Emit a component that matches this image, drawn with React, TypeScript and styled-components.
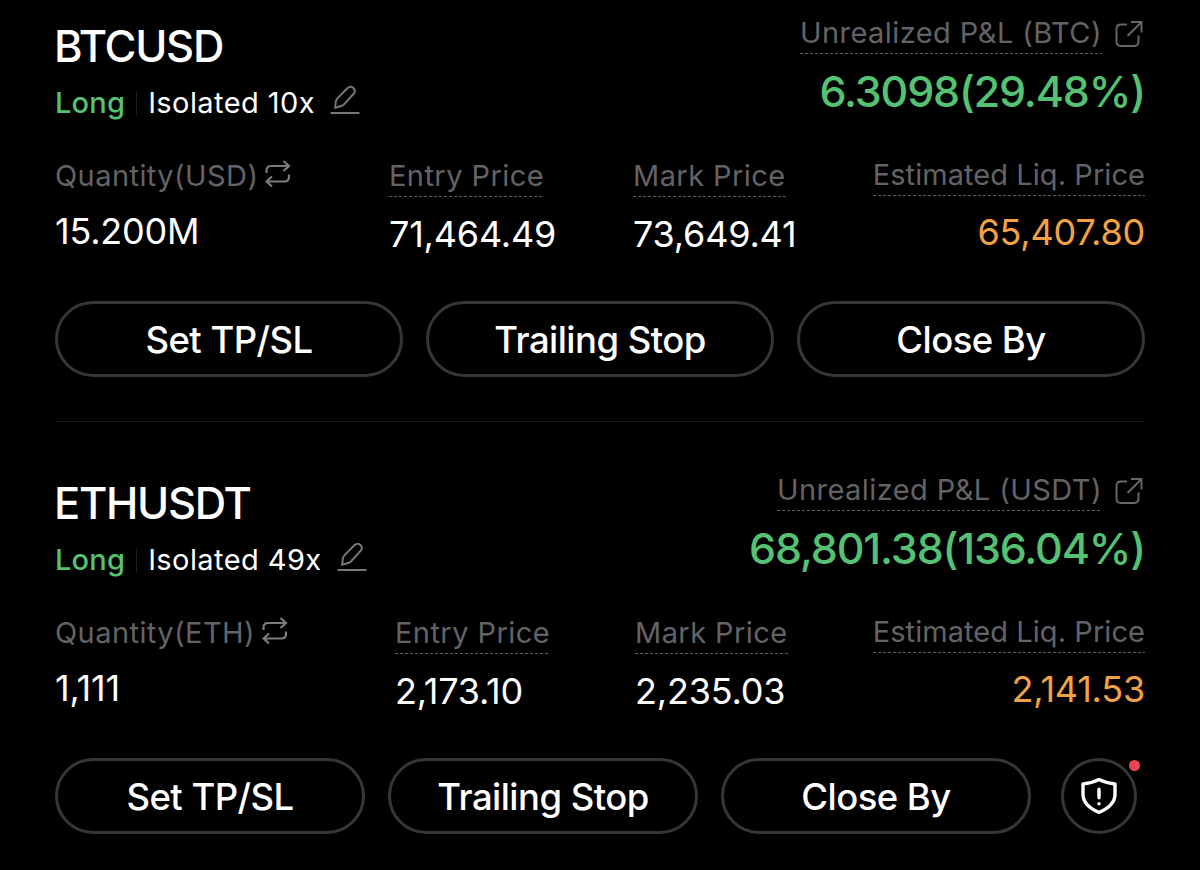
import styled, { createGlobalStyle } from 'styled-components';

const GlobalStyle = createGlobalStyle`
    * {
        box-sizing: border-box;
    }
    body {
        margin: 0;
        background-color: #000;
        color: #fff;
        font-family: Inter, 'Liberation Sans', sans-serif;
    }
`;
const Page = styled.div`
    width: 1200px;
    height: 870px;
    padding: 0 55px;
    overflow: hidden;
    background-color: #000;
`;
const Position = styled.section`
    height: 457px;
    padding-top: 13px;
`;
const Header = styled.div`
    display: flex;
    justify-content: space-between;
    height: 143px;
`;
const Heading = styled.div`
    padding-top: 7px;
`;
const Pair = styled.div`
    margin-left: -1px;
    font-size: 43.5px;
    font-weight: 500;
    line-height: 52px;
    letter-spacing: -1.3px;
`;
const Meta = styled.div`
    display: flex;
    align-items: center;
    height: 36px;
    margin-top: 13px;
    font-size: 29px;
    line-height: 36px;
    letter-spacing: 0.42px;
    white-space: nowrap;
    & > svg {
        margin: 0 0 6px 15px;
    }
`;
const Side = styled.span`
    color: #55c172;
    font-weight: 500;
    letter-spacing: 0.2px;
`;
const Separator = styled.span`
    width: 1px;
    height: 23px;
    margin: 0 11px;
    background-color: #1f1f26;
`;
const Pnl = styled.div`
    display: flex;
    flex-direction: column;
    align-items: flex-end;
`;
const PnlTitle = styled.div`
    display: flex;
    align-items: center;
    gap: 13px;
    margin-right: 2px;
`;
const PnlValue = styled.div`
    margin-top: 12px;
    color: #55c172;
    font-size: 43px;
    font-weight: 500;
    line-height: 50px;
    letter-spacing: -1.15px;
    white-space: nowrap;
`;
interface LabelProps {
    $dotted?: boolean;
    $tight?: boolean;
}
const Label = styled.div<LabelProps>`
    display: flex;
    align-items: flex-start;
    gap: 7px;
    height: 41px;
    color: #636367;
    font-size: 29px;
    line-height: 39px;
    letter-spacing: ${({ $tight }) => ($tight ? '0.06px' : '0.43px')};
    white-space: nowrap;
    & > svg {
        margin-top: 4px;
    }
    ${({ $dotted }) =>
        $dotted &&
        `
        background: repeating-linear-gradient(90deg, #5c5c61 0 3px, transparent 3px 5px) bottom / 100% 1px no-repeat;
    `}
`;
interface StatsProps {
    $columns: string;
}
const Stats = styled.div<StatsProps>`
    display: grid;
    grid-template-columns: ${({ $columns }) => $columns};
    height: 145px;
`;
const Stat = styled.div<{ $end?: boolean }>`
    display: flex;
    flex-direction: column;
    align-items: ${({ $end }) => ($end ? 'flex-end' : 'flex-start')};
    ${({ $end }) => $end && 'margin-top: -1px;'}
`;
interface ValueProps {
    $gap: number;
    $warn?: boolean;
}
const Value = styled.div<ValueProps>`
    margin-top: ${({ $gap }) => $gap}px;
    color: ${({ $warn }) => ($warn ? '#f2a145' : '#fff')};
    font-size: 36px;
    line-height: 44px;
    letter-spacing: -0.2px;
    white-space: nowrap;
`;
const Actions = styled.div`
    display: flex;
    gap: 23px;
`;
const Action = styled.button`
    flex: 1;
    height: 76px;
    padding: 2px 0 0;
    border: 3px solid #363638;
    border-radius: 38px;
    background-color: transparent;
    color: #fff;
    font-family: inherit;
    font-size: 36.5px;
    font-weight: 500;
    letter-spacing: -0.55px;
    cursor: pointer;
`;
const ShieldBTN = styled(Action)`
    position: relative;
    display: flex;
    flex: none;
    align-items: center;
    justify-content: center;
    width: 76px;
    margin: 0 8px 0 7px;
    padding: 0;
`;
const Dot = styled.span`
    position: absolute;
    top: -1px;
    right: -6px;
    width: 11px;
    height: 11px;
    border-radius: 50%;
    background-color: #ea4650;
`;
const Divider = styled.hr`
    height: 1px;
    margin: 44px 0 0;
    border: none;
    background-color: #1b1b20;
`;

const EditIcon = () => (
    <svg width="30" height="30" viewBox="0 0 30 30" fill="none" stroke="#77777b" strokeWidth="2">
        <path d="M5.2 22.6 L5.8 16.8 Q6.2 14.6 7.6 13.1 L17.6 3.1 Q20.2 0.8 23 2.6 Q26 5 24.2 8.2 L14.4 19 Q12.8 20.6 10.6 21.2 Z" />
        <path d="M0.5 28 H29.5" />
    </svg>
);

const ShareIcon = () => (
    <svg width="28" height="28" viewBox="0 0 28 28" fill="none" stroke="#68686c" strokeWidth="1.9">
        <path d="M12 4.5 H6 Q1.5 4.5 1.5 9 V21.5 Q1.5 26 6 26 H19 Q23.5 26 23.5 21.5 V15.5" />
        <path d="M16 2 H26.5 V12.5 M26.5 2 L12.5 16" />
    </svg>
);

const SwapIcon = () => (
    <svg width="26" height="28" viewBox="0 0 26 28" fill="none" stroke="#7b7b7f" strokeWidth="2.2">
        <path d="M1.5 13 V10.5 Q1.5 6 6 6 H24 M18.5 1 L24 6 L18.5 11" />
        <path d="M24 14.5 V17 Q24 21.5 19.5 21.5 H1.5 M7 16.5 L1.5 21.5 L7 26.5" />
    </svg>
);

const ShieldIcon = () => (
    <svg width="38" height="38" viewBox="0 0 38 38" fill="none" stroke="#fff" strokeWidth="3.4" strokeLinejoin="round" strokeLinecap="round">
        <path d="M19 2.6 Q26.5 6.4 35 7 V17.5 Q35 28.5 19 35.4 Q3 28.5 3 17.5 V7 Q11.5 6.4 19 2.6 Z" />
        <path d="M19 12.3 V20.8 M19 26.6 V26.8" />
    </svg>
);

const POSITIONS = [
    {
        pair: 'BTCUSD',
        margin: 'Isolated 10x',
        pnlUnit: 'BTC',
        pnl: '6.3098(29.48%)',
        unit: 'USD',
        quantity: '15.200M',
        entry: '71,464.49',
        mark: '73,649.41',
        liq: '65,407.80',
        columns: '334px 244px 1fr',
        alert: false
    },
    {
        pair: 'ETHUSDT',
        margin: 'Isolated 49x',
        pnlUnit: 'USDT',
        pnl: '68,801.38(136.04%)',
        unit: 'ETH',
        quantity: '1,111',
        entry: '2,173.10',
        mark: '2,235.03',
        liq: '2,141.53',
        columns: '340px 240px 1fr',
        alert: true
    }
];

function App() {
    return (
        <Page>
            <GlobalStyle />
            {POSITIONS.map((item, index) => (
                <Position key={item.pair}>
                    <Header>
                        <Heading>
                            <Pair>{item.pair}</Pair>
                            <Meta>
                                <Side>Long</Side>
                                <Separator />
                                {item.margin}
                                <EditIcon />
                            </Meta>
                        </Heading>
                        <Pnl>
                            <PnlTitle>
                                <Label $dotted>Unrealized P&amp;L ({item.pnlUnit})</Label>
                                <ShareIcon />
                            </PnlTitle>
                            <PnlValue>{item.pnl}</PnlValue>
                        </Pnl>
                    </Header>
                    <Stats $columns={`${item.columns} auto`}>
                        <Stat>
                            <Label>
                                Quantity({item.unit})
                                <SwapIcon />
                            </Label>
                            <Value $gap={12}>{item.quantity}</Value>
                        </Stat>
                        <Stat>
                            <Label $dotted>Entry Price</Label>
                            <Value $gap={15}>{item.entry}</Value>
                        </Stat>
                        <Stat>
                            <Label $dotted>Mark Price</Label>
                            <Value $gap={15}>{item.mark}</Value>
                        </Stat>
                        <Stat $end>
                            <Label $dotted $tight>
                                Estimated Liq. Price
                            </Label>
                            <Value $gap={14} $warn>
                                {item.liq}
                            </Value>
                        </Stat>
                    </Stats>
                    <Actions>
                        <Action>Set TP/SL</Action>
                        <Action>Trailing Stop</Action>
                        <Action>Close By</Action>
                        {item.alert && (
                            <ShieldBTN aria-label="Risk warning">
                                <ShieldIcon />
                                <Dot />
                            </ShieldBTN>
                        )}
                    </Actions>
                    {index < POSITIONS.length - 1 && <Divider />}
                </Position>
            ))}
        </Page>
    );
}

export default App;
